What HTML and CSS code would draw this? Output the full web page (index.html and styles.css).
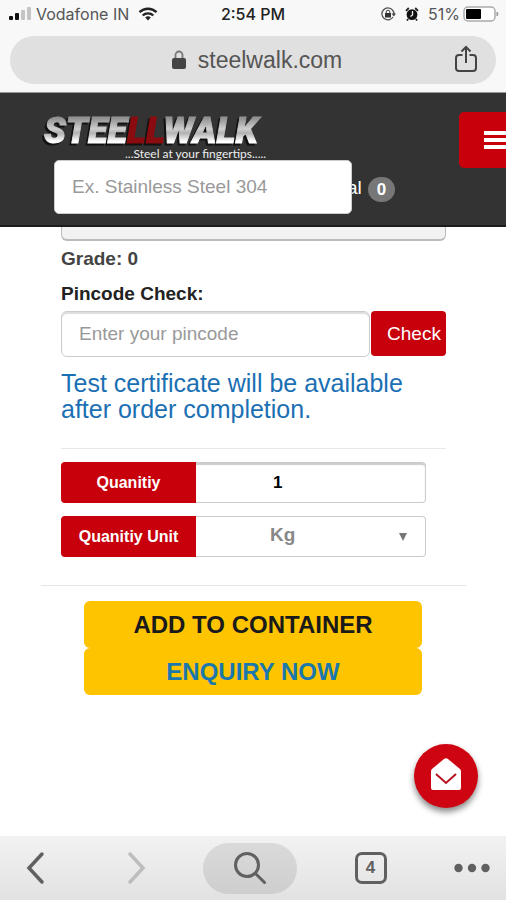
FILE: index.html
```html
<!DOCTYPE html>
<html lang="en">
<head>
<meta charset="utf-8">
<meta name="viewport" content="width=device-width, initial-scale=1">
<title>Steelwalk</title>
<link rel="stylesheet" href="styles.css">
</head>
<body>
<div class="browser-top">
  <div class="status">
    <div class="status-left">
      <svg width="24" height="14" viewBox="0 0 24 14"><rect x="1" y="9" width="4" height="4" rx="1" fill="#111"/><rect x="7" y="6" width="4" height="7" rx="1" fill="#111"/><rect x="13" y="3" width="4" height="10" rx="1" fill="#c4c4c4"/><rect x="19" y="0" width="4" height="13" rx="1" fill="#c4c4c4"/></svg>
      <span class="carrier">Vodafone IN</span>
      <svg class="wifi" width="20" height="14" viewBox="0 0 20 14" fill="none" stroke="#222" stroke-width="2.4"><path d="M1.5 5.2a12.200 12.200 0 0 1 17 0M4.700 8.500a7.600 7.600 0 0 1 10.600 0"/><path d="M10 13.500 7.200 10.600a4 4 0 0 1 5.600 0z" fill="#222" stroke="none"/></svg>
    </div>
    <span class="time">2:54 PM</span>
    <div class="status-right">
      <svg width="16" height="14" viewBox="0 0 16 14"><path d="M12.500 3A6 6 0 1 0 13 10M14 7a6 6 0 0 0-1.500-4" fill="none" stroke="#555" stroke-width="1.300"/><path d="M11.500 6.500h4.500l-2.200 3z" fill="#444"/><rect x="5" y="6" width="6" height="4.500" fill="#333"/><path d="M6.200 6V5a1.800 1.800 0 0 1 3.600 0v1" fill="none" stroke="#444"/></svg>
      <svg class="alarm" width="14" height="14" viewBox="0 0 14 14"><circle cx="7" cy="7.600" r="5.400" fill="#111"/><path d="M1 3.800 3.800 1M13 3.800 10.200 1M3 12l-1 1.600M11 12l1 1.600" stroke="#222" stroke-width="1.800"/><path d="M7.500 4v4L5.500 9.500" fill="none" stroke="#f8f8f8" stroke-width="1.300"/></svg>
      <span class="percent">51%</span>
      <svg width="37" height="16" viewBox="0 0 37 16"><rect x="1" y="1" width="31" height="14" rx="4" fill="#fff" stroke="#aaa" stroke-width="1.500"/><rect x="3" y="3" width="15" height="10" rx="1" fill="#000"/><path d="M34 6v4q2-2 0-4" fill="#999" stroke="#999"/></svg>
    </div>
  </div>
  <div class="address">
    <svg class="lock" width="16" height="20" viewBox="0 0 16 20"><rect x="1" y="8" width="14" height="11" rx="2" fill="#444"/><path d="M4.500 8V5a3.500 3.500 0 0 1 7 0v3" fill="none" stroke="#777" stroke-width="1.800"/></svg>
    <span>steelwalk.com</span>
    <button class="plain share" aria-label="Share"><svg width="24" height="28" viewBox="0 0 24 28" fill="none" stroke="#444" stroke-width="2"><path d="M8.500 10H5a3 3 0 0 0-3 3v10a3 3 0 0 0 3 3h14a3 3 0 0 0 3-3V13a3 3 0 0 0-3-3h-3.500M12 18V2M7.500 6.500 12 2l4.500 4.500"/></svg></button>
  </div>
</div>

<header class="site-header">
  <div class="brand">
    <svg class="logo" width="240" height="56" viewBox="0 0 240 56" role="img" aria-label="Steelwalk">
      <defs><linearGradient id="steel" x1="0" y1="0" x2="0" y2="1"><stop offset="0.200" stop-color="#929292"/><stop offset="0.450" stop-color="#cfcfcf"/><stop offset="0.550" stop-color="#b2b2b2"/><stop offset="0.750" stop-color="#fff"/></linearGradient></defs>
      <text class="logo-text" x="2" y="39">STEE<tspan class="logo-red">LL</tspan>WALK</text>
      <text class="logo-tag" x="83" y="54">...Steel at your fingertips.....</text>
    </svg>
    <button class="menu" aria-label="Menu"><svg width="22" height="20" viewBox="0 0 22 20" fill="#fff"><path d="M0 1h22v4H0zM0 8h22v4H0zM0 15h22v4H0z"/></svg></button>
  </div>
  <div class="search-row">
    <input class="search" type="text" placeholder="Ex. Stainless Steel 304" aria-label="Search products">
    <span class="total">al</span><span class="badge">0</span>
  </div>
</header>

<main>
  <div class="panel-end"></div>
  <section class="details">
    <p class="label grade">Grade: 0</p>
    <label class="label" for="pin">Pincode Check:</label>
    <div class="pin-row">
      <input id="pin" type="text" placeholder="Enter your pincode">
      <button class="check">Check</button>
    </div>
    <p class="notice">Test certificate will be available after order completion.</p>
    <div class="group first">
      <label for="qty">Quanitiy</label>
      <input id="qty" type="text" value="1">
    </div>
    <div class="group">
      <label for="unit">Quanitiy Unit</label>
      <div class="select-wrap">
        <select id="unit"><option>Kg</option></select>
        <svg class="caret" width="10" height="8" viewBox="0 0 10 8"><path d="M1 0h8L5 8z" fill="#777"/></svg>
      </div>
    </div>
  </section>
  <section class="actions">
    <button class="add">ADD TO CONTAINER</button>
    <a class="enquiry" href="#">ENQUIRY NOW</a>
  </section>
  <button class="mail" aria-label="Send message"><svg width="32" height="34" viewBox="0 0 32 34"><path d="M2 12Q1 13 1 14v17q0 2 2 2h26q2 0 2-2V14q0-1-1-2L18 2q-2-1.500-4 0z" fill="#fff"/><path d="m6 17 10 9 10-9" fill="none" stroke="#b71220" stroke-width="2"/></svg></button>
</main>

<nav class="toolbar">
  <button class="plain" aria-label="Back"><svg width="20" height="34" viewBox="0 0 20 34" fill="none" stroke="#606060" stroke-width="3.500" stroke-linecap="round"><path d="M16 3 3 17l13 14"/></svg></button>
  <button class="plain forward" aria-label="Forward"><svg width="20" height="34" viewBox="0 0 20 34" fill="none" stroke="#bdbdbd" stroke-width="3.500" stroke-linecap="round"><path d="m4 3 13 14L4 31"/></svg></button>
  <button class="find" aria-label="Search"><svg width="34" height="34" viewBox="0 0 34 34" fill="none" stroke="#606060" stroke-width="3" stroke-linecap="round"><circle cx="14" cy="14" r="11.500"/><path d="m22.500 22.500 9 9"/></svg></button>
  <button class="tabs">4</button>
  <button class="plain more" aria-label="More"><svg width="36" height="10" viewBox="0 0 36 10" fill="#606060"><circle cx="4.500" cy="5" r="4.200"/><circle cx="18" cy="5" r="4.200"/><circle cx="31.500" cy="5" r="4.200"/></svg></button>
</nav>
</body>
</html>
```
FILE: styles.css
```css
* { box-sizing: border-box; }

body {
  margin: 0;
  min-height: 100vh;
  display: flex;
  flex-direction: column;
  background: #fff;
  color: #222;
  font-family: "Liberation Sans", Arial, sans-serif;
  font-size: 19px;
}

button, input, select { font: inherit; margin: 0; }
button { border: 0; padding: 0; }
svg { display: block; flex: none; }
.plain { background: none; }

/* Browser chrome */
.browser-top {
  background: #f8f8f8;
  padding: 4px 10px 8px;
  font-family: Inter, Roboto, sans-serif;
  border-bottom: 1px solid #999;
}
.status {
  display: grid;
  grid-template-columns: 1fr auto 1fr;
  align-items: center;
  height: 20px;
  margin: 0 -4px 12px;
  font-size: 16px;
}
.status-left, .status-right { display: flex; align-items: center; }
.status-left { gap: 4px; margin-left: 2px; }
.status-right { justify-content: flex-end; }
.wifi { margin-left: 5px; }
.carrier, .percent { color: #555; }
.time { color: #222; font-weight: 500; }
.alarm { margin: 0 9px 0 9px; }
.percent { margin-right: 3px; }
.address {
  position: relative;
  display: flex;
  align-items: center;
  justify-content: center;
  gap: 11px;
  height: 48px;
  padding-left: 7px;
  border-radius: 24px;
  background: #e0e0e0;
  color: #555;
  font-family: "Liberation Sans", Arial, sans-serif;
  font-size: 23px;
}
.share { position: absolute; right: 18px; top: 9px; }

/* Site header */
.site-header {
  height: 134px;
  padding: 11px 0 0 42px;
  background: #333;
  border-bottom: 2px solid #1c1c1c;
}
.brand { display: flex; justify-content: space-between; height: 56px; }
.logo-text {
  fill: url(#steel);
  stroke: url(#steel);
  stroke-width: 1px;
  filter: drop-shadow(-2px 2px 0 #111);
  font-family: Roboto, sans-serif;
  font-size: 36px;
  font-style: italic;
  font-weight: 900;
}
.logo-red { fill: #8b0c10; stroke: #8b0c10; }
.logo-tag { font-family: Lato, sans-serif; font-size: 12px; fill: #eee; }
.menu {
  display: flex;
  align-items: center;
  width: 47px;
  height: 56px;
  margin-top: 8px;
  padding-left: 25px;
  border-radius: 5px 0 0 5px;
  background: #c7000b;
}
.search-row { display: flex; align-items: center; margin-left: 12px; }
.search {
  position: relative;
  z-index: 1;
  width: 298px;
  height: 54px;
  padding: 0 17px;
  border: 1px solid #ccc;
  border-radius: 5px;
  background: #fff;
}
input::placeholder { color: #999; opacity: 1; }
.total { margin: 2px 6px 0 -5px; color: #fff; }
.badge {
  margin-top: 4px;
  padding: 0 9px;
  border-radius: 13px;
  background: #777;
  color: #fff;
  font-size: 17px;
  font-weight: 700;
  line-height: 25px;
}

/* Product form */
main { position: relative; flex: 1; }
.panel-end {
  height: 14px;
  margin: 0 60px 0 61px;
  border: 1px solid #bbb;
  border-top: 0;
  border-bottom-width: 2px;
  border-radius: 0 0 6px 6px;
  background: #f2f2f2;
}
.details {
  margin: 0 40px 15px 41px;
  padding: 6px 20px 28px;
  border-bottom: 1px solid #e5e5e5;
}
.label { display: block; margin: 0; font-weight: 700; line-height: 24px; }
.grade { margin-bottom: 11px; color: #444; }
.pin-row { display: flex; gap: 1px; margin-top: 5px; }
.pin-row input {
  flex: 1;
  min-width: 0;
  height: 46px;
  padding: 0 17px;
  border: 1px solid #ccc;
  border-radius: 6px;
  box-shadow: inset 0 2px 1px #ddd;
}
.check {
  width: 75px;
  height: 45px;
  padding-left: 11px;
  border-radius: 4px;
  background: #c7000b;
  color: #fff;
}
.notice {
  margin: 13px 0;
  padding-bottom: 26px;
  border-bottom: 1px solid #e8e8e8;
  color: #1b6fb3;
  font-size: 25px;
  line-height: 26px;
}
.group { display: flex; height: 41px; margin-right: 20px; }
.first { margin-bottom: 13px; }
.group label {
  width: 135px;
  border-radius: 4px 0 0 4px;
  background: #c7000b;
  color: #fff;
  font-size: 16px;
  font-weight: 700;
  line-height: 41px;
  text-align: center;
}
.group input, .select-wrap { flex: 1; min-width: 0; }
.group input, .group select {
  height: 41px;
  border: 1px solid #ccc;
  border-left: 0;
  border-radius: 0 4px 4px 0;
  background: #fff;
  font-weight: 700;
}
.group input {
  padding: 0 77px;
  box-shadow: inset 0 2px 1px #ccc;
  font-size: 17px;
}
.select-wrap { position: relative; }
.group select {
  width: 100%;
  padding: 0 74px 4px;
  appearance: none;
  color: #888;
}
.caret { position: absolute; right: 18px; top: 17px; pointer-events: none; }

.actions { display: grid; margin: 0 84px; }
.add, .enquiry {
  border-radius: 6px;
  background: #fec400;
  color: #1a1a1a;
  font-size: 24px;
  font-weight: 700;
  line-height: 47px;
  text-align: center;
  text-decoration: none;
}
.enquiry { color: #1b78ad; }
.mail {
  position: absolute;
  right: 28px;
  bottom: 28px;
  display: grid;
  place-items: center;
  width: 64px;
  height: 64px;
  padding-bottom: 4px;
  border-radius: 50%;
  background: #cf0412;
  box-shadow: 0 4px 6px #0007;
}

/* Bottom toolbar */
.toolbar {
  display: flex;
  align-items: center;
  justify-content: space-between;
  height: 64px;
  padding: 0 16px 0 26px;
  background: linear-gradient(#f2f2f2, #e2e2e2);
}
.forward { margin-left: 22px; }
.more { margin-left: 10px; }
.find {
  display: grid;
  place-items: center;
  width: 94px;
  height: 51px;
  border-radius: 26px;
  background: linear-gradient(#dadada, #cecece);
}
.tabs {
  width: 32px;
  height: 32px;
  border: 3px solid #606060;
  border-radius: 7px;
  background: none;
  color: #606060;
  font-size: 17px;
  font-weight: 700;
}
```
